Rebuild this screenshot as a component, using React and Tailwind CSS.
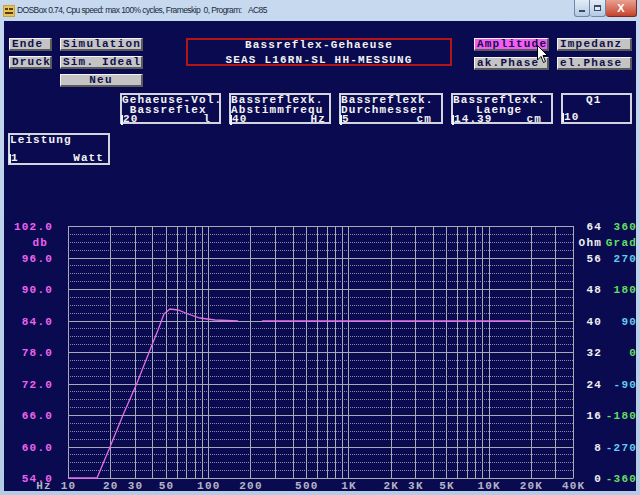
import React from 'react';

const X = (f) => 64 + (505 * Math.log10(f / 10)) / Math.log10(4000);
const GY = (i) => 205 + i * 31.5;

const vFreqs = [];
for (const d of [10, 100, 1000, 10000]) {
  for (let m = 1; m <= 9; m++) {
    if (d * m <= 40000) vFreqs.push(d * m);
  }
}

const dbLabels = ['102.0', '96.0', '90.0', '84.0', '78.0', '72.0', '66.0', '60.0', '54.0'];
const ohmLabels = ['64', '56', '48', '40', '32', '24', '16', '8', '0'];
const gradLabels = ['360', '270', '180', '90', '0', '-90', '-180', '-270', '-360'];
const xLabels = [
  [10, '10'], [20, '20'], [30, '30'], [50, '50'], [100, '100'], [200, '200'], [500, '500'],
  [1000, '1K'], [2000, '2K'], [3000, '3K'], [5000, '5K'], [10000, '10K'], [20000, '20K'], [40000, '40K'],
];

const curveA = '64,457 93,457 106,426 119,394 133,362 146,329 154,309 160,293 166,288 174,289 184,293 196,297 211,299 234,300';
const curveB = '258,300 526,300';

const mono = "font-['Liberation_Mono',monospace] font-bold";

function Btn({ label, className }) {
  return (
    <div className={`h-[13px] flex items-center border-t border-l border-t-[#f4f4f4] border-l-[#f4f4f4] border-b-2 border-r-2 border-b-[#5a5a5a] border-r-[#5a5a5a] text-[11px] leading-[11px] tracking-[1.2px] text-[#12124a] whitespace-pre ${className}`}>
      {label}
    </div>
  );
}

function Field({ l1, l2, value, unit, className }) {
  return (
    <div className={`h-[31px] border-2 border-[#d4d4dc] pt-[1px] text-[11px] leading-[9.5px] tracking-[1.1px] text-[#f2f2f2] whitespace-pre flex flex-col ${className}`}>
      <div className="h-[9.5px]">{l1}</div>
      <div className="h-[9.5px]">{l2}</div>
      <div className="h-[9.5px] flex justify-between">
        <span className="border-l-2 border-[#f2f2f2] -ml-[1px]">{value}</span>
        <span>{unit}</span>
      </div>
    </div>
  );
}

function Chart() {
  return (
    <svg width="632" height="320" viewBox="0 150 632 320" className="block mt-[6px]" fontFamily="Liberation Mono, monospace" fontWeight="bold" fontSize="11" letterSpacing="1.2">
      {[...Array(8)].map((_, i) =>
        [1, 2, 3].map((q) => {
          const y = Math.round(GY(i) + q * 7.875) + 0.5;
          return <line key={`d${i}-${q}`} x1="64" x2="569" y1={y} y2={y} stroke="#8a8aa6" strokeWidth="1" strokeDasharray="1 1" />;
        })
      )}
      {[...Array(9)].map((_, i) => {
        const y = Math.round(GY(i)) + 0.5;
        return <line key={`h${i}`} x1="64" x2="569" y1={y} y2={y} stroke="#a9a9b4" strokeWidth="1" />;
      })}
      {vFreqs.map((f) => {
        const x = Math.round(X(f)) + 0.5;
        return <line key={`v${f}`} x1={x} x2={x} y1="205" y2="457.5" stroke="#a9a9b4" strokeWidth="1" />;
      })}
      <polyline points={curveA} fill="none" stroke="#e46ee4" strokeWidth="1.3" />
      <polyline points={curveB} fill="none" stroke="#e46ee4" strokeWidth="1.3" />

      {dbLabels.map((t, i) => (
        <text key={t} x="49" y={GY(i) + 4} textAnchor="end" fill="#ee62ee">{t}</text>
      ))}
      <text x="44" y="225" textAnchor="end" fill="#ee62ee">db</text>

      {ohmLabels.map((t, i) => (
        <text key={`o${t}`} x="598" y={GY(i) + 4} textAnchor="end" fill="#f0f0f0">{t}</text>
      ))}
      <text x="598" y="225" textAnchor="end" fill="#f0f0f0">Ohm</text>
      {gradLabels.map((t, i) => (
        <text key={`g${t}`} x="633" y={GY(i) + 4} textAnchor="end" fill={i % 2 === 0 ? '#62de62' : '#62ccf0'}>{t}</text>
      ))}
      <text x="633" y="225" textAnchor="end" fill="#62de62">Grad</text>

      <text x="40" y="467.5" textAnchor="middle" fill="#b4b4c4">Hz</text>
      {xLabels.map(([f, t]) => (
        <text key={`x${t}`} x={X(f) + 0.6} y="467.5" textAnchor="middle" fill="#b4b4c4">{t}</text>
      ))}
    </svg>
  );
}

export default function App() {
  return (
    <div className="w-[640px] h-[495px] flex flex-col bg-gradient-to-b from-[#c6d9ef] to-[#b4cbe6] overflow-hidden">
      {/* title bar */}
      <div className="h-[21px] flex items-center pl-[3px] font-['Liberation_Sans',Arial,sans-serif]">
        <svg width="12" height="12" viewBox="0 0 12 12" className="shrink-0">
          <rect width="12" height="12" fill="#caa23c" />
          <rect x="1" y="1" width="10" height="10" fill="#e8c35a" />
          <rect x="2" y="3" width="3" height="2" fill="#5a3a10" />
          <rect x="6" y="3" width="4" height="2" fill="#5a3a10" />
          <rect x="2" y="7" width="8" height="2" fill="#5a3a10" />
        </svg>
        <span className="ml-[2px] text-[8.5px] tracking-[-0.6px] text-[#1c2a3c] whitespace-pre">DOSBox 0.74, Cpu speed: max 100% cycles, Frameskip  0, Program:    AC85</span>
        <div className="ml-auto self-start flex">
          <div className="w-[16px] h-[17px] rounded-b-[3px] border border-[#6f86a8] border-t-0 bg-gradient-to-b from-[#e3ecf7] to-[#b5c9e3] flex items-end justify-center pb-[4px]">
            <div className="w-[6px] h-[2px] bg-white border border-[#3a4a60]" />
          </div>
          <div className="w-[16px] h-[17px] rounded-b-[3px] border border-[#6f86a8] border-t-0 border-l-0 bg-gradient-to-b from-[#e3ecf7] to-[#b5c9e3] flex items-center justify-center">
            <div className="w-[7px] h-[6px] border border-[#3a4a60] border-t-2 bg-white/40" />
          </div>
          <div className="w-[31px] h-[17px] mr-[3px] rounded-b-[3px] border border-[#7a2a20] border-t-0 border-l-0 bg-gradient-to-b from-[#e8a090] to-[#c4402c] flex items-center justify-center text-white text-[11px] font-bold leading-none">
            X
          </div>
        </div>
      </div>

      {/* frame + DOS screen */}
      <div className="flex-1 px-[4px] pb-[4px]">
        <div className={`relative w-[632px] h-[470px] bg-[#0a0a50] pt-[17px] ${mono}`}>
          <div className="flex items-start">
            <div className="ml-[5px] grid grid-cols-[43px_83px] gap-x-[8px] gap-y-[5px]">
              <Btn label="Ende" className="bg-[#c4c4c4] pl-[2px]" />
              <Btn label="Simulation" className="bg-[#c4c4c4] pl-[2px]" />
              <Btn label="Druck" className="bg-[#c4c4c4] pl-[2px]" />
              <Btn label="Sim. Ideal" className="bg-[#c4c4c4] pl-[2px]" />
              <div />
              <Btn label="Neu" className="bg-[#c4c4c4] justify-center" />
            </div>
            <div className="ml-[43px] w-[266px] h-[28px] border-2 border-[#b41414] flex flex-col items-center justify-center gap-[5px] text-[11px] leading-[10px] tracking-[1.2px] text-[#f2f2f2] whitespace-pre">
              <div>Bassreflex-Gehaeuse</div>
              <div>SEAS L16RN-SL HH-MESSUNG</div>
            </div>
            <div className="ml-[22px] grid grid-cols-[75px_75px] gap-x-[8px] gap-y-[6px]">
              <Btn label="Amplitude" className="bg-[#f45cf4] pl-[2px]" />
              <Btn label="Impedanz" className="bg-[#c4c4c4] pl-[2px]" />
              <Btn label="ak.Phase" className="bg-[#c4c4c4] pl-[2px]" />
              <Btn label="el.Phase" className="bg-[#c4c4c4] pl-[2px]" />
            </div>
          </div>

          <div className="mt-[6px] ml-[116px] flex gap-[8px]">
            <Field l1="Gehaeuse-Vol." l2=" Bassreflex" value="20" unit="l" className="w-[101px] pr-[8px]" />
            <Field l1="Bassreflexk." l2="Abstimmfrequ" value="40" unit="Hz" className="w-[102px] pr-[3px]" />
            <Field l1="Bassreflexk." l2="Durchmesser" value="5" unit="cm" className="w-[104px] pr-[9px]" />
            <Field l1="Bassreflexk." l2="   Laenge" value="14.39" unit="cm" className="w-[102px] pr-[9px]" />
            <Field l1="   Q1" l2="" value="10" unit="" className="w-[71px]" />
          </div>

          <div className="mt-[9px] ml-[4px] flex">
            <Field l1="Leistung" l2="" value="1" unit="Watt" className="w-[102px] h-[32px] pr-[4px]" />
          </div>

          <Chart />

          {/* mouse pointer */}
          <svg width="12" height="19" viewBox="0 0 12 19" className="absolute left-[533px] top-[24px]">
            <path d="M0.5 0.5 L0.5 15 L4 11.5 L6.5 17.5 L8.5 16.5 L6 10.5 L10.5 10.5 Z" fill="#ffffff" stroke="#000000" strokeWidth="1" />
          </svg>
        </div>
      </div>
    </div>
  );
}
